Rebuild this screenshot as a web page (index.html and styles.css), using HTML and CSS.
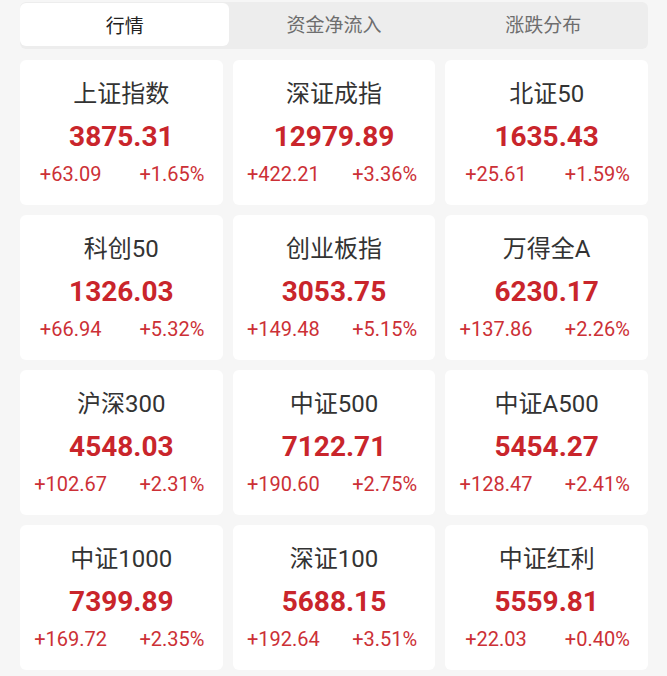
FILE: index.html
```html
<!DOCTYPE html>
<html lang="zh-CN">
<head>
    <meta charset="UTF-8">
    <meta name="viewport" content="width=device-width, initial-scale=1.0">
    <title>行情</title>
    <link rel="stylesheet" href="styles.css">
</head>
<body>
    <div class="tabs">
        <div class="tab active">行情</div>
        <div class="tab">资金净流入</div>
        <div class="tab">涨跌分布</div>
    </div>

    <div class="grid">
        <div class="card">
            <div class="name">上证指数</div>
            <div class="price">3875.31</div>
            <div class="change"><span>+63.09</span><span>+1.65%</span></div>
        </div>
        <div class="card">
            <div class="name">深证成指</div>
            <div class="price">12979.89</div>
            <div class="change"><span>+422.21</span><span>+3.36%</span></div>
        </div>
        <div class="card">
            <div class="name">北证50</div>
            <div class="price">1635.43</div>
            <div class="change"><span>+25.61</span><span>+1.59%</span></div>
        </div>

        <div class="card">
            <div class="name">科创50</div>
            <div class="price">1326.03</div>
            <div class="change"><span>+66.94</span><span>+5.32%</span></div>
        </div>
        <div class="card">
            <div class="name">创业板指</div>
            <div class="price">3053.75</div>
            <div class="change"><span>+149.48</span><span>+5.15%</span></div>
        </div>
        <div class="card">
            <div class="name">万得全A</div>
            <div class="price">6230.17</div>
            <div class="change"><span>+137.86</span><span>+2.26%</span></div>
        </div>

        <div class="card">
            <div class="name">沪深300</div>
            <div class="price">4548.03</div>
            <div class="change"><span>+102.67</span><span>+2.31%</span></div>
        </div>
        <div class="card">
            <div class="name">中证500</div>
            <div class="price">7122.71</div>
            <div class="change"><span>+190.60</span><span>+2.75%</span></div>
        </div>
        <div class="card">
            <div class="name">中证A500</div>
            <div class="price">5454.27</div>
            <div class="change"><span>+128.47</span><span>+2.41%</span></div>
        </div>

        <div class="card">
            <div class="name">中证1000</div>
            <div class="price">7399.89</div>
            <div class="change"><span>+169.72</span><span>+2.35%</span></div>
        </div>
        <div class="card">
            <div class="name">深证100</div>
            <div class="price">5688.15</div>
            <div class="change"><span>+192.64</span><span>+3.51%</span></div>
        </div>
        <div class="card">
            <div class="name">中证红利</div>
            <div class="price">5559.81</div>
            <div class="change"><span>+22.03</span><span>+0.40%</span></div>
        </div>
    </div>
</body>
</html>
```

FILE: styles.css
```css
body {
    font-family: Roboto, "Noto Sans CJK SC", sans-serif;
    background-color: #f6f6f6;
    margin: 0;
    padding: 2px 19px 0 20px;
}
.tabs {
    display: flex;
    background-color: #ededed;
    border-radius: 6px;
    height: 47px;
}
.tab {
    flex: 1;
    display: flex;
    align-items: center;
    justify-content: center;
    font-size: 19px;
    color: #6e6e6e;
    border-radius: 6px;
    margin: 0 0 4px;
}
.tab.active {
    background-color: white;
    color: #222;
    margin: 1px 0 3px;
}
.grid {
    display: grid;
    grid-template-columns: repeat(3, 1fr);
    column-gap: 10px;
    row-gap: 10px;
    margin-top: 11px;
}
.card {
    background-color: white;
    border-radius: 6px;
    height: 145px;
    text-align: center;
}
.name {
    font-size: 24px;
    color: #333;
    margin-top: 18px;
    line-height: 32px;
}
.price {
    font-size: 28px;
    font-weight: bold;
    color: #c9252b;
    margin-top: 10px;
    line-height: 34px;
}
.change {
    display: flex;
    font-size: 20px;
    color: #cc3036;
    margin-top: 9px;
    line-height: 22px;
}
.change span {
    flex: 1;
}
```
